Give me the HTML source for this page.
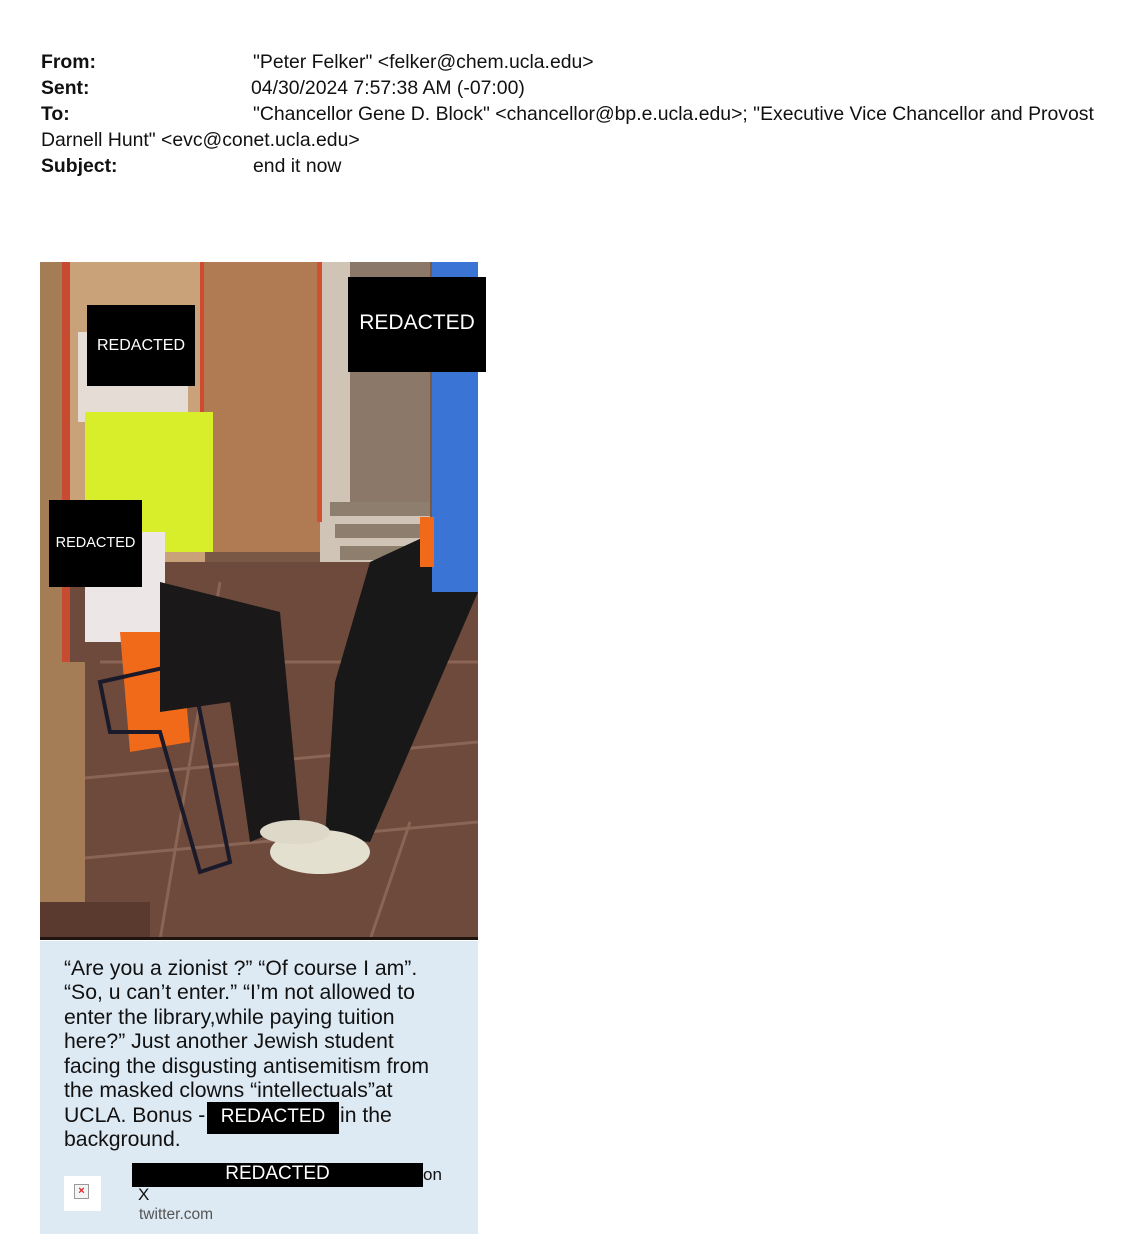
<!DOCTYPE html>
<html><head><meta charset="utf-8">
<style>
html,body{margin:0;padding:0;background:#fff;}
body{width:1132px;height:1258px;position:relative;overflow:hidden;font-family:"Liberation Sans",Arial,sans-serif;}
.h{position:absolute;font-size:19.4px;color:#111;white-space:nowrap;line-height:20px;}
.b{font-weight:bold;}
.c{position:absolute;left:64px;font-size:21.2px;color:#111;white-space:nowrap;line-height:22px;}
.red{position:absolute;background:#000;color:#fff;text-align:center;white-space:nowrap;}
</style></head><body>
<div class="h b" style="left:41px;top:52px">From:</div>
<div class="h" style="left:253px;top:52px">"Peter Felker" &lt;felker@chem.ucla.edu&gt;</div>
<div class="h b" style="left:41px;top:78px">Sent:</div>
<div class="h" style="left:251px;top:78px">04/30/2024 7:57:38 AM (-07:00)</div>
<div class="h b" style="left:41px;top:104px">To:</div>
<div class="h" style="left:253px;top:104px">"Chancellor Gene D. Block" &lt;chancellor@bp.e.ucla.edu&gt;; "Executive Vice Chancellor and Provost</div>
<div class="h" style="left:41px;top:130px">Darnell Hunt" &lt;evc@conet.ucla.edu&gt;</div>
<div class="h b" style="left:41px;top:156px">Subject:</div>
<div class="h" style="left:253px;top:156px">end it now</div>

<svg style="position:absolute;left:40px;top:262px" width="438" height="678" viewBox="0 0 438 678">
<rect width="438" height="678" fill="#7a5846"/>
<rect x="20" y="0" width="145" height="300" fill="#c9a27a"/>
<rect x="160" y="0" width="120" height="290" fill="#b07a52"/>
<rect x="280" y="0" width="110" height="300" fill="#cfc4b6"/>
<rect x="310" y="0" width="80" height="240" fill="#8c7868"/>
<rect x="160" y="0" width="4" height="290" fill="#d04a30"/>
<rect x="277" y="0" width="5" height="260" fill="#d05030"/>
<g fill="#8e7e6e"><rect x="290" y="240" width="100" height="14"/><rect x="295" y="262" width="95" height="14"/><rect x="300" y="284" width="90" height="14"/></g>
<rect x="0" y="300" width="438" height="378" fill="#6e4a3c"/>
<path d="M60 400 L438 400 M0 520 L438 480 M0 600 L438 560 M120 678 L180 320 M330 678 L370 560" stroke="#8a6454" stroke-width="3" fill="none"/>
<rect x="0" y="0" width="22" height="678" fill="#a47c56"/>
<rect x="22" y="0" width="8" height="620" fill="#c84a30"/>
<rect x="0" y="400" width="45" height="278" fill="#a47c56"/>
<rect x="0" y="640" width="110" height="38" fill="#5a3a2e"/>
<rect x="38" y="70" width="110" height="90" fill="#e6dcd6"/>
<rect x="45" y="150" width="128" height="140" fill="#d8ee2a"/>
<rect x="45" y="270" width="80" height="110" fill="#ece6e6"/>
<path d="M80 370 L140 370 L150 480 L90 490 Z" fill="#f06a1a"/>
<path d="M60 420 L150 400 L190 600 L160 610 L120 470 L70 470 Z" fill="none" stroke="#1a1a2a" stroke-width="4"/>
<path d="M120 320 L240 350 L260 560 L210 580 L190 440 L120 450 Z" fill="#1a1818"/>
<path d="M330 300 L438 250 L438 330 L330 580 L285 575 L295 420 Z" fill="#181818"/>
<rect x="392" y="0" width="46" height="330" fill="#3a74d4"/>
<rect x="380" y="255" width="14" height="50" fill="#f06a1a"/>
<ellipse cx="280" cy="590" rx="50" ry="22" fill="#e4e0d0"/>
<ellipse cx="255" cy="570" rx="35" ry="12" fill="#ddd8c8"/>
<rect x="0" y="675" width="438" height="3" fill="#201410"/>
</svg>
<div class="red" style="left:87px;top:305px;width:108px;height:81px;line-height:81px;font-size:16px">REDACTED</div>
<div class="red" style="left:348px;top:277px;width:138px;height:95px;line-height:92px;font-size:21px">REDACTED</div>
<div class="red" style="left:49px;top:500px;width:93px;height:87px;line-height:87px;font-size:14.5px">REDACTED</div>

<div style="position:absolute;left:40px;top:941px;width:438px;height:293px;background:#dde9f3"></div>
<div class="c" style="top:958px">“Are you a zionist ?” “Of course I am”.</div>
<div class="c" style="top:982px">“So, u can’t enter.” “I’m not allowed to</div>
<div class="c" style="top:1007px">enter the library,while paying tuition</div>
<div class="c" style="top:1031px">here?” Just another Jewish student</div>
<div class="c" style="top:1056px">facing the disgusting antisemitism from</div>
<div class="c" style="top:1080px">the masked clowns “intellectuals”at</div>
<div class="c" style="top:1105px">UCLA. Bonus -</div>
<div class="c" style="top:1105px;left:340px">in the</div>
<div class="c" style="top:1129px">background.</div>
<div class="red" style="left:207px;top:1102px;width:132px;height:32px;line-height:30px;font-size:19px">REDACTED</div>
<div class="red" style="left:132px;top:1163px;width:291px;height:24px;line-height:22px;font-size:19px">REDACTED</div>
<div class="c" style="left:423px;top:1164px;font-size:17px">on</div>
<div class="c" style="left:138px;top:1184px;font-size:17px">X</div>
<div class="c" style="left:139px;top:1204px;font-size:15.5px;color:#555">twitter.com</div>
<div style="position:absolute;left:64px;top:1176px;width:37px;height:35px;background:#fff"></div>
<div style="position:absolute;left:74px;top:1184px;width:13px;height:13px;border:1px solid #999;background:#f4f4f4;color:#e02020;font-size:11px;line-height:13px;text-align:center;font-weight:bold">×</div>
</body></html>
